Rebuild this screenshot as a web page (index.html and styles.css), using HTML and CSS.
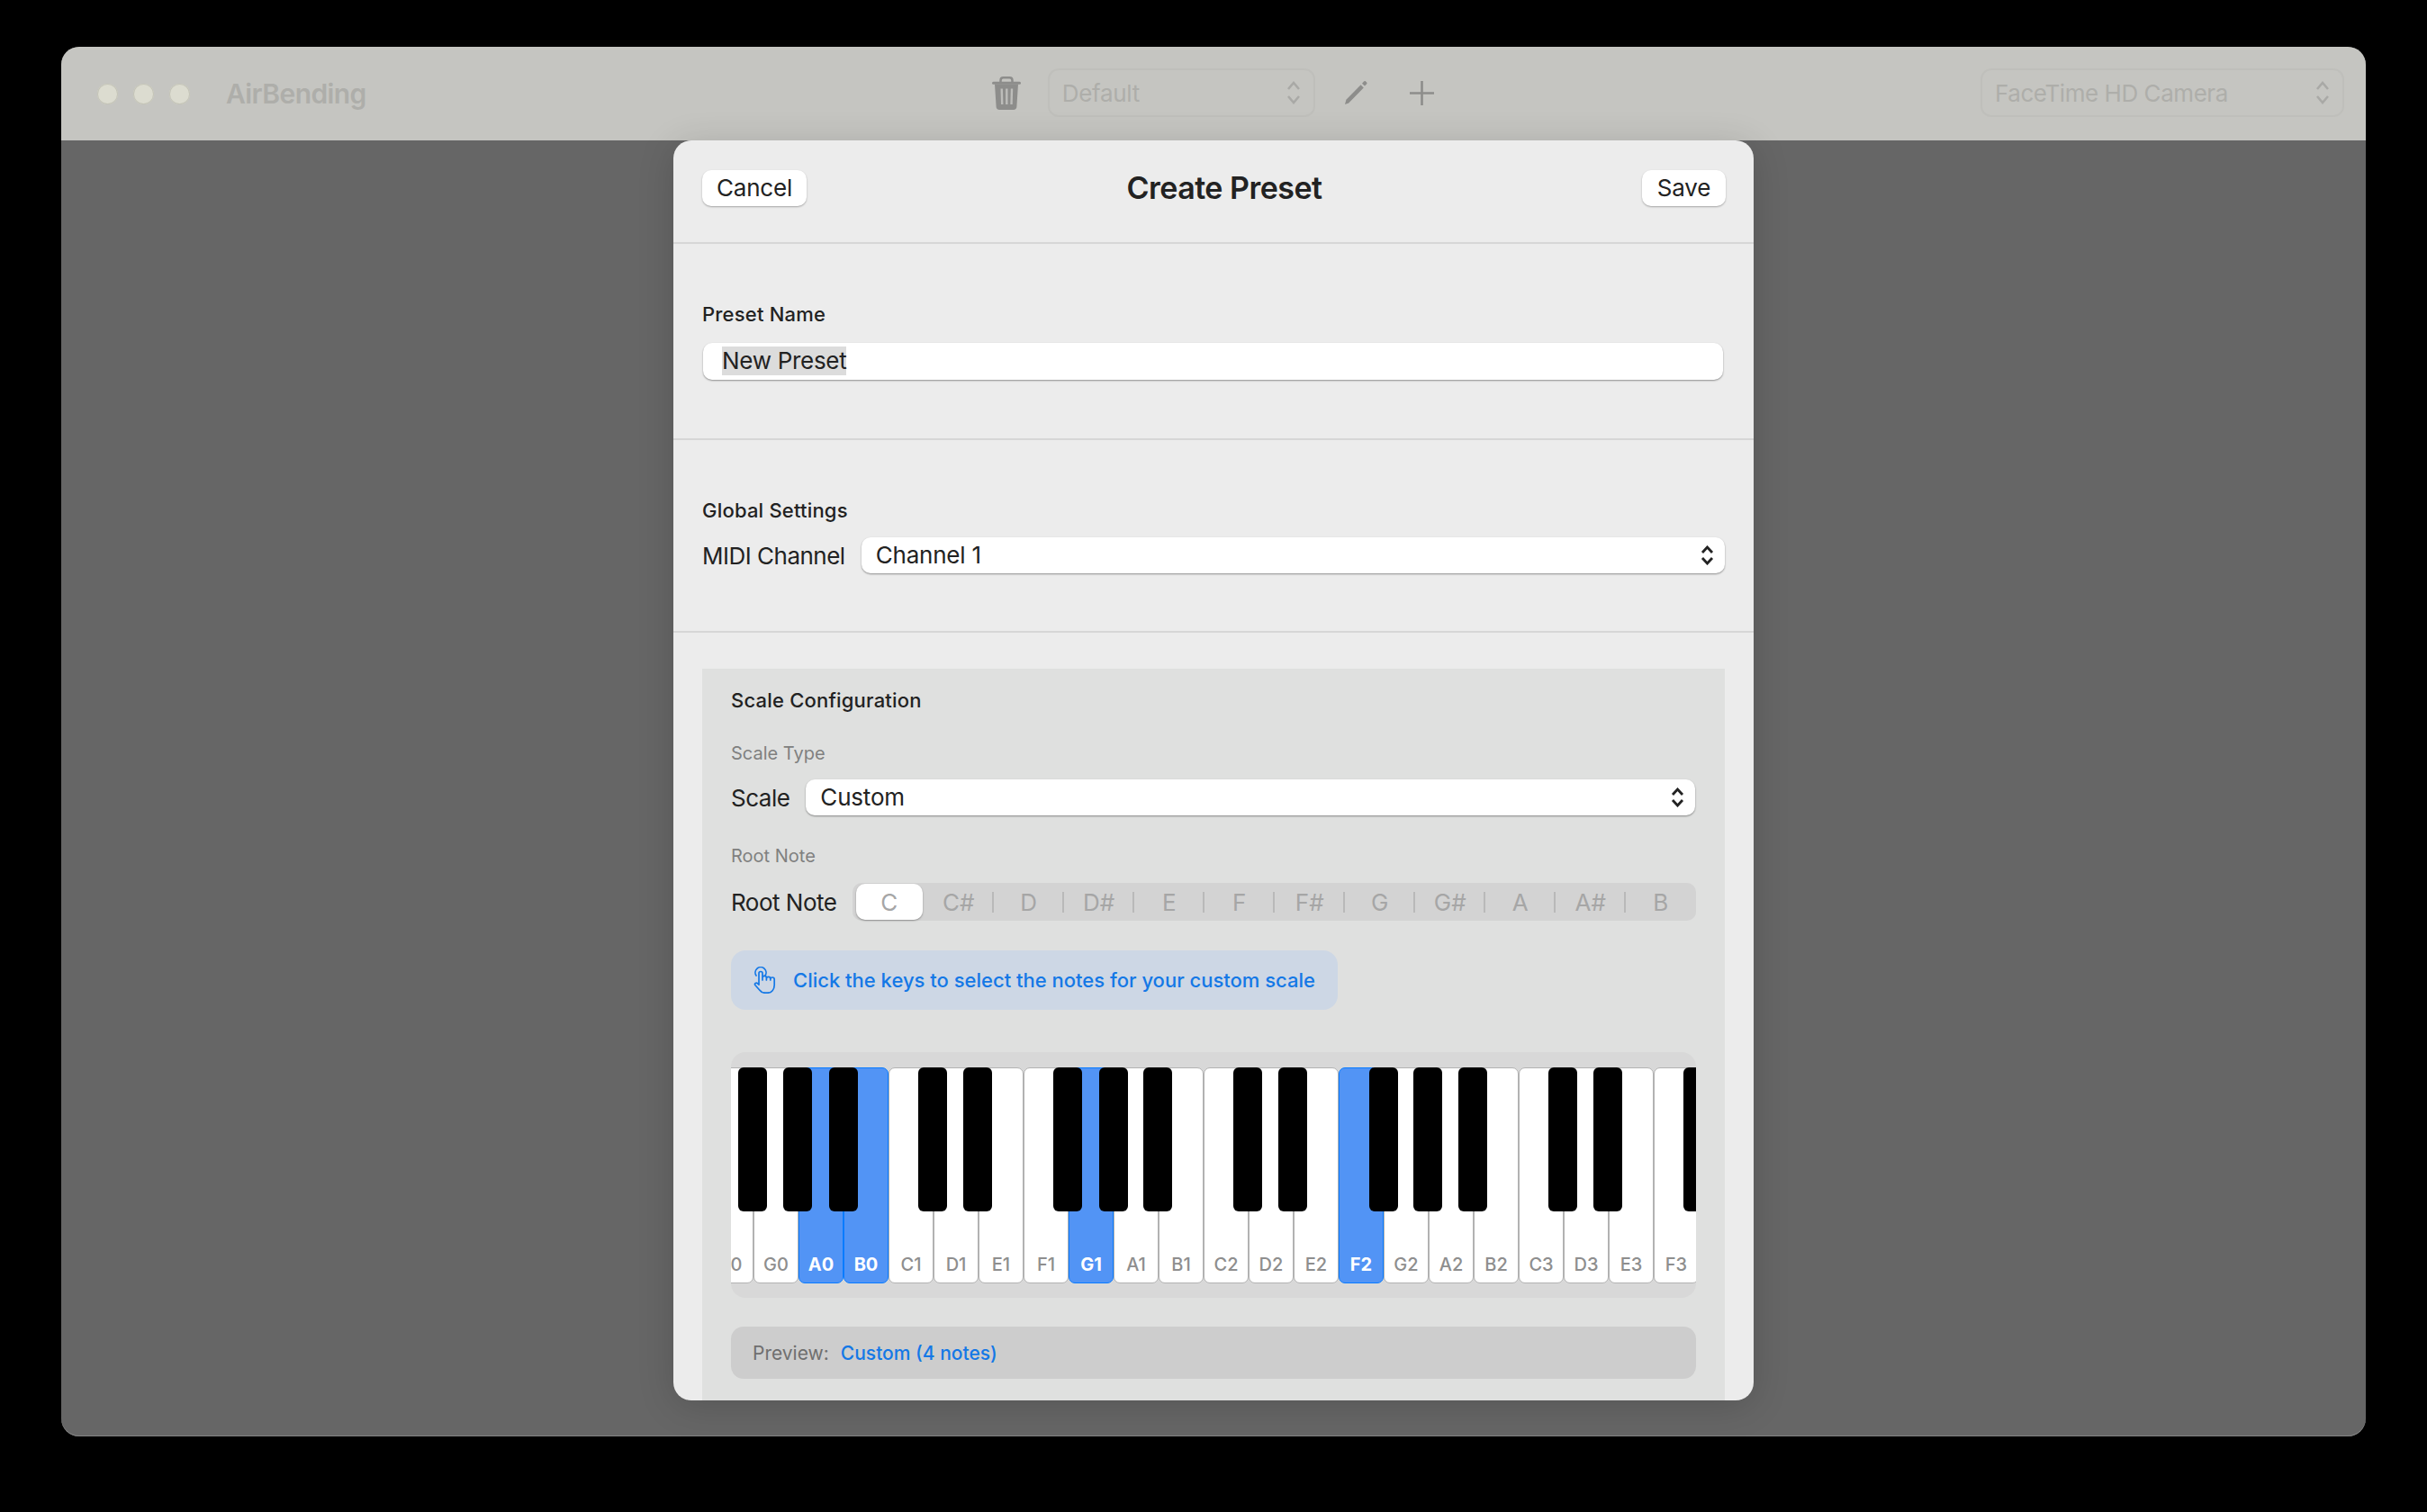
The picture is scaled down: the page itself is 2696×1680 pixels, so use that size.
FILE: index.html
```html
<!doctype html>
<html lang="en">
  <head>
    <meta charset="UTF-8" />
    <meta name="viewport" content="width=device-width, initial-scale=1.0" />
    <title>AirBending</title>
    <link rel="stylesheet" href="styles.css">
  </head>
  <body>
    <div class="window">
      <header class="titlebar">
        <div class="lights">
          <span class="light"></span>
          <span class="light"></span>
          <span class="light"></span>
        </div>
        <span class="app-name">AirBending</span>

        <div class="toolbar">
          <svg class="icon-trash" width="32" height="37" viewBox="0 0 32 37">
            <path d="M9.500 6V4.500C9.500 2.500 10.700 1.300 12.500 1.300h7c1.800 0 3 1.200 3 3.200V6" fill="none" stroke="#8d8d8b" stroke-width="2.500"/>
            <rect x="0" y="5.800" width="32" height="3" rx="1.500" fill="#8d8d8b"/>
            <path d="M3 8.500h26l-1.600 25c-.1 2-1.500 3.500-3.500 3.500H8.100c-2 0-3.400-1.500-3.500-3.500z" fill="#8d8d8b"/>
            <path d="M10.700 13.500l.5 17.500M16.300 13.500v17.500M22 13.500l-.5 17.500" stroke="#bdbdba" stroke-width="2.400" fill="none"/>
          </svg>
          <div class="tool-select preset-select">
            <span>Default</span>
            <svg width="16" height="26" viewBox="0 0 16 26"><path d="M2 9l6-7 6 7M2 17l6 7 6-7" fill="none" stroke="#a9a9a6" stroke-width="2.600"/></svg>
          </div>
          <svg class="icon-pencil" width="28" height="28" viewBox="0 0 28 28">
            <path d="M1 27l1.400-5.200L18.600 5.200l3.200 3.200L5.200 25.400z" fill="#8d8d8b"/>
            <path d="M20 3.800l2-2.300c.7-.7 1.500-.7 2.100-.1l1 1c.6.6.6 1.400-.1 2.100l-2 2.100z" fill="#8d8d8b"/>
          </svg>
          <svg class="icon-plus" width="27" height="27" viewBox="0 0 27 27">
            <path d="M13.500 0v27M0 13.500h27" stroke="#8d8d8b" stroke-width="2.600" fill="none"/>
          </svg>
        </div>

        <div class="tool-select camera-select">
          <span>FaceTime HD Camera</span>
          <svg width="16" height="26" viewBox="0 0 16 26"><path d="M2 9l6-7 6 7M2 17l6 7 6-7" fill="none" stroke="#a9a9a6" stroke-width="2.600"/></svg>
        </div>
      </header>

      <main class="content">
        <div class="modal">
          <div class="modal-head">
            <button class="btn cancel-btn">Cancel</button>
            <h2>Create Preset</h2>
            <button class="btn save-btn">Save</button>
          </div>

          <section class="section">
            <h3>Preset Name</h3>
            <div class="field"><span class="selected-text">New Preset</span></div>
          </section>

          <section class="section">
            <h3>Global Settings</h3>
            <div class="row">
              <label>MIDI Channel</label>
              <div class="select">
                <span>Channel 1</span>
                <svg width="15" height="22" viewBox="0 0 15 22"><path d="M2 8l5.500-6L13 8M2 14l5.500 6 5.500-6" fill="none" stroke="#222" stroke-width="2.800"/></svg>
              </div>
            </div>
          </section>

          <section class="scale-box">
            <h3>Scale Configuration</h3>
            <div class="sub-label scale-type">Scale Type</div>
            <div class="row">
              <label>Scale</label>
              <div class="select inset-select">
                <span>Custom</span>
                <svg width="15" height="22" viewBox="0 0 15 22"><path d="M2 8l5.500-6L13 8M2 14l5.500 6 5.500-6" fill="none" stroke="#222" stroke-width="2.800"/></svg>
              </div>
            </div>

            <div class="sub-label root-label">Root Note</div>
            <div class="row">
              <label>Root Note</label>
              <div class="segments">
                <span class="seg on">C</span>
                <span class="seg line">C#</span>
                <span class="seg line">D</span>
                <span class="seg line">D#</span>
                <span class="seg line">E</span>
                <span class="seg line">F</span>
                <span class="seg line">F#</span>
                <span class="seg line">G</span>
                <span class="seg line">G#</span>
                <span class="seg line">A</span>
                <span class="seg line">A#</span>
                <span class="seg">B</span>
              </div>
            </div>

            <div class="hint">
              <svg width="26" height="30" viewBox="0 0 26 30" fill="none" stroke="#1478e6" stroke-width="1.700" stroke-linecap="round" stroke-linejoin="round">
                <path d="M3 10a6 6 0 1 1 10 0"/>
                <path d="M6 19.800V7.500a2 2 0 0 1 4 0V15m0-2.500a2.200 2.200 0 0 1 4.400 0V15m0-1.500a2.200 2.200 0 0 1 4.400 0V15m0-.8a2.200 2.200 0 0 1 4.400 0v6.300c0 5-3 8.700-7.700 8.700h-2.700c-3 0-4.600-1-6.100-3.200L1.800 20.500c-1-1.600 1.200-3.300 2.700-1.800L6 20.200"/>
              </svg>
              <span>Click the keys to select the notes for your custom scale</span>
            </div>

            <div class="piano">
              <div class="keys">
                <div class="key">F0<i class="black"></i></div>
                <div class="key">G0<i class="black"></i></div>
                <div class="key active">A0<i class="black"></i></div>
                <div class="key active">B0</div>
                <div class="key">C1<i class="black"></i></div>
                <div class="key">D1<i class="black"></i></div>
                <div class="key">E1</div>
                <div class="key">F1<i class="black"></i></div>
                <div class="key active">G1<i class="black"></i></div>
                <div class="key">A1<i class="black"></i></div>
                <div class="key">B1</div>
                <div class="key">C2<i class="black"></i></div>
                <div class="key">D2<i class="black"></i></div>
                <div class="key">E2</div>
                <div class="key active">F2<i class="black"></i></div>
                <div class="key">G2<i class="black"></i></div>
                <div class="key">A2<i class="black"></i></div>
                <div class="key">B2</div>
                <div class="key">C3<i class="black"></i></div>
                <div class="key">D3<i class="black"></i></div>
                <div class="key">E3</div>
                <div class="key">F3<i class="black"></i></div>
              </div>
            </div>

            <div class="preview">
              <span class="preview-label">Preview:</span>
              <span class="preview-value">Custom (4 notes)</span>
            </div>
          </section>
        </div>
      </main>
    </div>
  </body>
</html>
```

FILE: styles.css
```css
* {
  box-sizing: border-box;
}
body {
  margin: 0;
  width: 2696px;
  height: 1680px;
  padding: 52px 68px 84px;
  background: #000;
  font-family: Inter, "Noto Sans", sans-serif;
  color: #222;
  overflow: hidden;
}
h2,
h3 {
  margin: 0;
}

/* window frame */
.window {
  height: 1544px;
  border-radius: 20px;
  overflow: hidden;
  background: #666;
  display: flex;
  flex-direction: column;
  box-shadow: inset 0 -1px 0 #858585;
}
.titlebar {
  flex: 0 0 104px;
  background: #c5c5c1;
  display: flex;
  align-items: center;
  padding: 0 24px 0 40px;
}
.lights {
  display: flex;
  gap: 17px;
}
.light {
  width: 23px;
  height: 23px;
  border-radius: 50%;
  background: #dcdcd0;
  box-shadow: inset 0 0 0 1px #c4c4b8;
}
.app-name {
  margin-left: 40px;
  font-size: 30px;
  font-weight: 600;
  color: #aeaeaa;
  letter-spacing: -0.6px;
}
.toolbar {
  display: flex;
  align-items: center;
  margin-top: -2px;
  margin-left: 695px;
}
.icon-pencil {
  margin-left: 32px;
}
.icon-plus {
  margin-left: 45px;
}
.tool-select {
  height: 54px;
  display: flex;
  align-items: center;
  justify-content: space-between;
  padding: 0 14px 0 14px;
  border: 2px solid #bfbfbb;
  border-radius: 12px;
  font-size: 26px;
  letter-spacing: -0.3px;
  color: #aeaeaa;
}
.preset-select {
  width: 297px;
  margin-left: 30px;
}
.camera-select {
  width: 404px;
  margin-top: -2px;
  margin-left: auto;
  letter-spacing: -0.45px;
}

/* modal */
.content {
  flex: 1;
  display: flex;
  justify-content: center;
  align-items: flex-start;
}
.modal {
  width: 1200px;
  height: 1400px;
  border-radius: 20px;
  background: #ececec;
  overflow: hidden;
  box-shadow: 0 6px 40px rgba(0, 0, 0, 0.16);
}
.modal-head {
  height: 115px;
  padding: 0 31px 8px 32px;
  display: flex;
  align-items: center;
  justify-content: space-between;
  border-bottom: 2px solid #d6d6d6;
}
.modal-head h2 {
  font-size: 34px;
  font-weight: 600;
  letter-spacing: -0.5px;
}
.btn {
  height: 40px;
  padding: 0;
  border: 0;
  border-radius: 10px;
  background: #fff;
  box-shadow: 0 1px 2px rgba(0, 0, 0, 0.3);
  font-family: inherit;
  font-size: 26px;
  letter-spacing: -0.2px;
  color: #222;
}
.cancel-btn {
  width: 116px;
}
.save-btn {
  width: 93px;
}
.section {
  padding: 64px 32px;
  border-bottom: 2px solid #d6d6d6;
  display: flex;
  flex-direction: column;
  gap: 16px;
}
h3 {
  font-size: 22px;
  font-weight: 500;
  line-height: 28px;
  letter-spacing: 0.2px;
}
.field {
  height: 41px;
  margin: 2px 2px 1px 1px;
  padding: 4px 21px;
  border-radius: 10px;
  background: #fff;
  box-shadow: 0 1px 2px rgba(0, 0, 0, 0.4);
  font-size: 26px;
  line-height: 32px;
  letter-spacing: -0.3px;
}
.selected-text {
  display: inline-block;
  background: #dcdcdc;
}
.row {
  display: flex;
  align-items: center;
  gap: 18px;
}
.row label {
  font-size: 26px;
  letter-spacing: -0.5px;
  white-space: nowrap;
}
.select {
  flex: 1;
  height: 40px;
  padding: 0 12px 0 16px;
  display: flex;
  align-items: center;
  justify-content: space-between;
  border-radius: 10px;
  background: #fff;
  box-shadow: 0 1px 2px rgba(0, 0, 0, 0.4);
  font-size: 26px;
  letter-spacing: -0.2px;
}
.inset-select {
  margin-right: 1px;
}
.select span {
  margin-top: -2px;
}

/* scale configuration */
.scale-box {
  margin-top: 40px;
  margin-inline: 32px;
  padding: 21px 32px 24px;
  background: #dfe0df;
}
.sub-label {
  font-size: 20px;
  line-height: 26px;
  color: #808080;
}
.scale-type {
  margin-top: 32px;
  margin-bottom: 16px;
}
.root-label {
  margin-top: 32px;
  margin-bottom: 17px;
}
.segments {
  flex: 1;
  min-width: 0;
  height: 42px;
  padding: 1px 0;
  display: flex;
  justify-content: center;
  border-radius: 10px;
  background: #d3d3d3;
  font-size: 26px;
  color: #a6a6a6;
}
.seg {
  flex: 0 0 78px;
  display: flex;
  align-items: center;
  justify-content: center;
}
.seg.line {
  background: linear-gradient(#b9b9b9, #b9b9b9) right center / 2px 23px no-repeat;
}
.seg.on {
  flex-basis: 74px;
  margin: 0 1px 0 3px;
  border-radius: 10px;
  background: #fff;
  box-shadow: 0 1px 2px rgba(0, 0, 0, 0.35);
}
.hint {
  width: 674px;
  height: 66px;
  margin-top: 33px;
  padding-left: 25px;
  display: flex;
  align-items: center;
  gap: 18px;
  border-radius: 16px;
  background: #cdd7e5;
  color: #1478e6;
  font-size: 22px;
  font-weight: 500;
}

/* keyboard */
.piano {
  height: 273px;
  margin-top: 47px;
  padding: 17px 0 16px;
  border-radius: 16px;
  background: #d8d8d8;
  overflow: hidden;
}
.keys {
  display: flex;
  height: 240px;
  margin-left: -25px;
}
.key {
  position: relative;
  flex: 0 0 50px;
  display: flex;
  align-items: flex-end;
  justify-content: center;
  padding-bottom: 8px;
  border: 1px solid #b2b2b2;
  border-radius: 7px;
  background: #fff;
  font-size: 20px;
  font-weight: 500;
  color: #8e8e8e;
}
.key.active {
  border: 1.5px solid #0a7bff;
  background: #5294f5;
  color: #fff;
  font-weight: 700;
}
.black {
  position: absolute;
  z-index: 1;
  top: -1px;
  right: -16px;
  width: 32px;
  height: 160px;
  border-radius: 6px;
  background: #000;
}
.key.active .black {
  top: -1.5px;
  right: -16.5px;
}
.preview {
  height: 58px;
  margin-top: 32px;
  padding-left: 24px;
  display: flex;
  align-items: center;
  gap: 13px;
  border-radius: 14px;
  background: #cdcdcd;
  font-size: 21px;
}
.preview-label {
  color: #6f6f6f;
}
.preview-value {
  color: #1478e6;
  font-weight: 500;
}
```
